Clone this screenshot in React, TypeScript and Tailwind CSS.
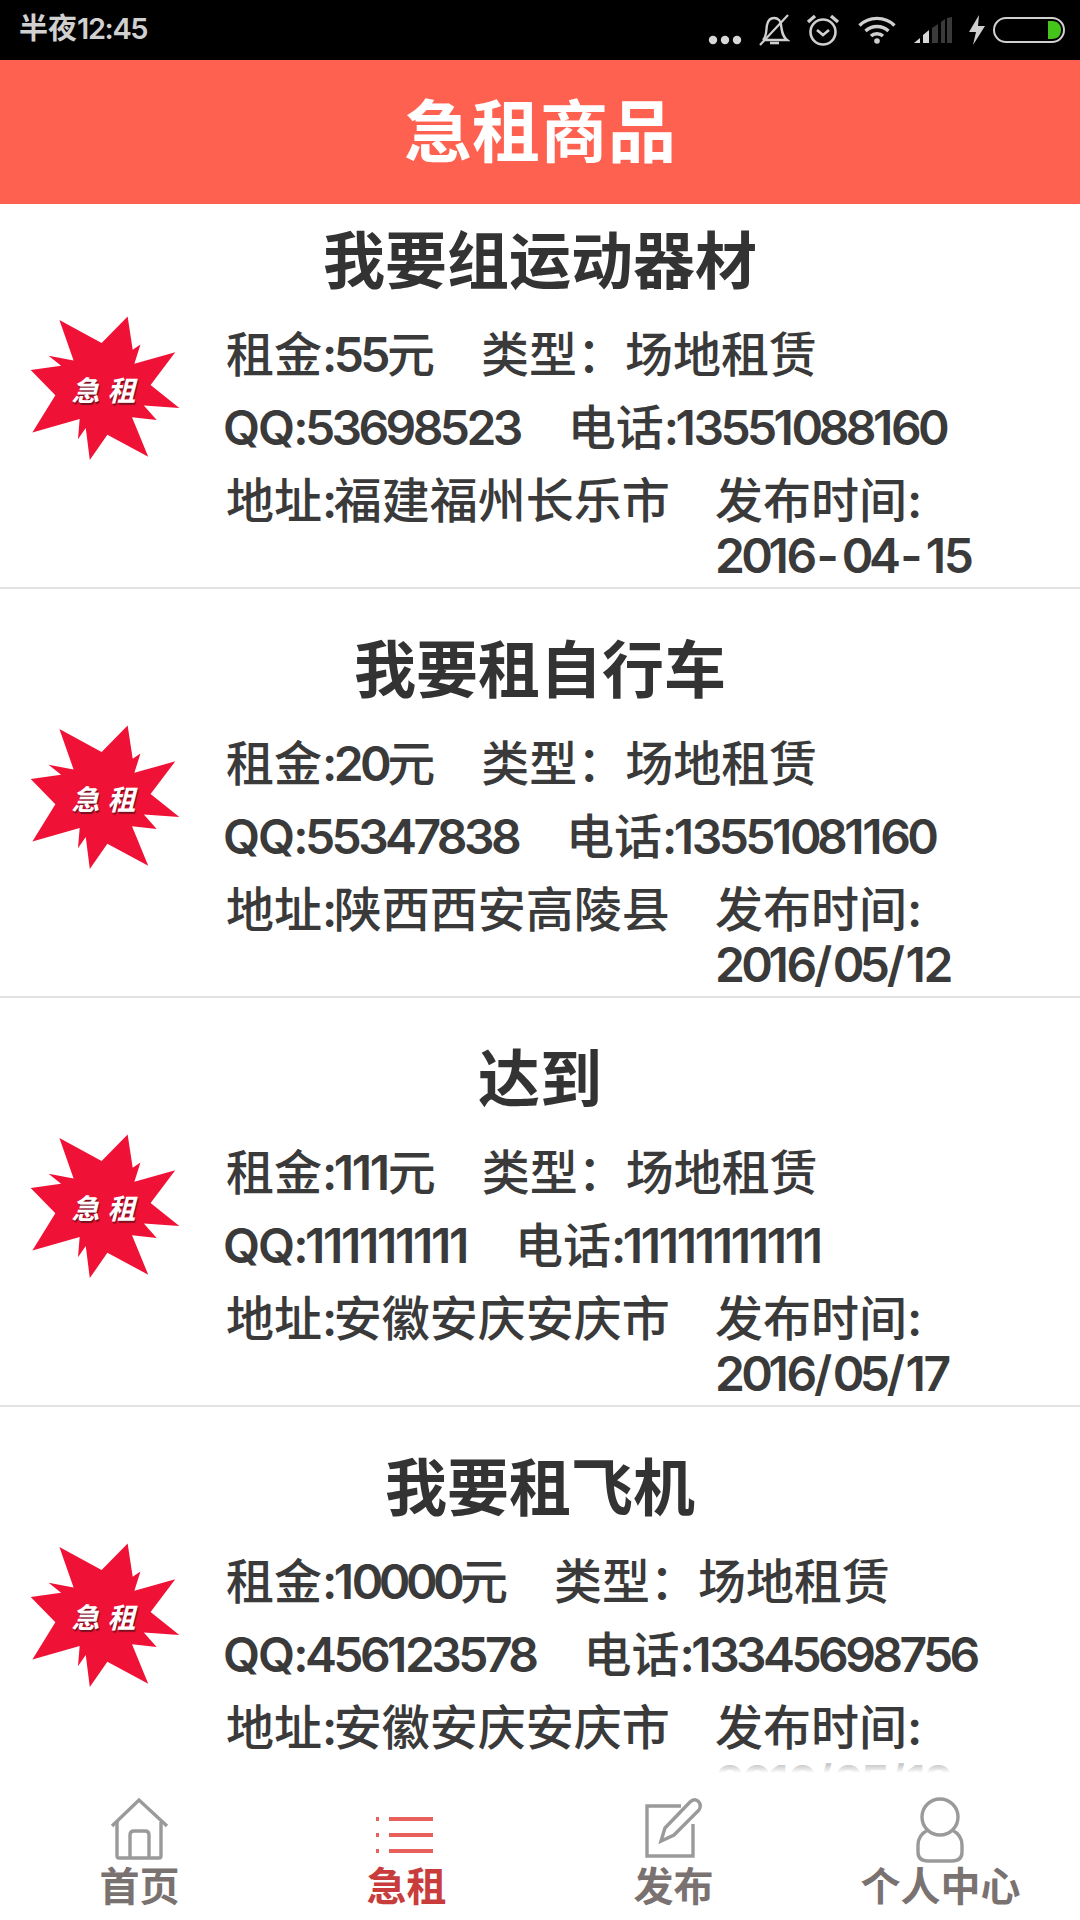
import React from 'react';

const items = [
  { title: '我要组运动器材', rent: '55', qq: '53698523', phone: '13551088160', addr: '福建福州长乐市', date: '2016-04-15' },
  { title: '我要租自行车', rent: '20', qq: '55347838', phone: '13551081160', addr: '陕西西安高陵县', date: '2016/05/12' },
  { title: '达到', rent: '111', qq: '111111111', phone: '11111111111', addr: '安徽安庆安庆市', date: '2016/05/17' },
  { title: '我要租飞机', rent: '10000', qq: '456123578', phone: '13345698756', addr: '安徽安庆安庆市', date: '2016/05/12' },
];

// the screenshot's digits are narrow and proportional, so each kind gets its own spacing
const charClass = (c: string) => {
  if (c === 'Q') return 'tracking-[-2px]';
  if (c === '1') return 'tracking-[-2.3px]';
  if (c === '0') return 'tracking-[-4.6px]';
  if (c === '-') return 'mx-[3px] tracking-[0px]';
  if (c === '/') return 'mx-[0.5px] tracking-[0px]';
  return 'tracking-[-3.6px]';
};

const Txt = ({ children }: { children: string }) => (
  <>
    {children.split(/([A-Za-z0-9:\/\-]+)/).map((part, i) =>
      /[A-Za-z0-9:\/\-]/.test(part) ? (
        <span key={i} className="font-semibold">
          {part.split('').map((c, j) => (
            <span key={j} className={charClass(c)}>{c}</span>
          ))}
        </span>
      ) : (
        <span key={i}>{part}</span>
      )
    )}
  </>
);

const Burst = () => (
  <div className="relative w-[152px] h-[147px] -mt-[3px]">
    <svg viewBox="90 78 450 434" className="w-[152px] h-[147px]">
      <polygon
        fill="#f01236"
        points="180,92 305,160 382,82 397,180 420,165 402,222 523,188 450,285 535,353 430,345 468,388 395,380 443,497 322,432 270,507 258,412 235,445 240,385 100,425 168,315 95,240 185,228 148,198 222,212"
      />
    </svg>
    <div className="absolute inset-0 flex items-center justify-center gap-[8px] pr-[3px] text-[28px] leading-none font-bold italic text-white [text-shadow:1px_2px_1px_#7a1020] font-['Noto_Sans_CJK_SC',sans-serif]">
      <span>急</span>
      <span>租</span>
    </div>
  </div>
);

const Card = ({ item }: { item: (typeof items)[number] }) => (
  <div className="h-[385px] mb-[24px] border-b-2 border-[#e2e2e2] shrink-0">
    <div className="h-[114px] flex items-center justify-center text-[62px] font-bold text-[#333]">{item.title}</div>
    <div className="flex">
      <div className="w-[226px] pl-[29px] shrink-0">
        <Burst />
      </div>
      <div className="flex-1 text-[48px] font-medium text-[#3a3a3a]">
        <div className="h-[73px] flex items-center gap-[46px] whitespace-nowrap">
          <span><Txt>{`租金:${item.rent}元`}</Txt></span>
          <span>类型：场地租赁</span>
        </div>
        <div className="h-[73px] flex items-center gap-[48px] -ml-[3px] whitespace-nowrap">
          <span><Txt>{`QQ:${item.qq}`}</Txt></span>
          <span><Txt>{`电话:${item.phone}`}</Txt></span>
        </div>
        <div className="flex mt-[9px] leading-[55px] whitespace-nowrap">
          <div className="w-[489px] shrink-0"><Txt>{`地址:${item.addr}`}</Txt></div>
          <div>
            <div><Txt>发布时间:</Txt></div>
            <div><Txt>{item.date}</Txt></div>
          </div>
        </div>
      </div>
    </div>
  </div>
);

const StatusIcons = () => (
  <div className="flex items-center">
    <svg width="36" height="10" viewBox="0 0 36 10" className="mt-[20px]" fill="#d8d8d8">
      <circle cx="5" cy="5" r="4.2" />
      <circle cx="17" cy="5" r="4.2" />
      <circle cx="29" cy="5" r="4.2" />
    </svg>
    <svg width="32" height="32" viewBox="0 0 32 32" className="ml-[14px]" fill="none" stroke="#cfcfcf" strokeWidth="2.4">
      <path d="M5 26 C9 22 8 16 9 11 C10 6 13 4 16 4 C20 4 23 7 23 11 C24 17 24 22 29 26 H5" />
      <path d="M12 29 H21" strokeWidth="2.6" />
      <path d="M2 31 L30 1" strokeWidth="2.2" />
    </svg>
    <svg width="34" height="34" viewBox="0 0 34 34" className="ml-[16px]" fill="none" stroke="#cfcfcf" strokeWidth="2.6">
      <circle cx="17" cy="19" r="12.5" />
      <path d="M11 17 L17 22 L23 17" />
      <path d="M2 9 L9 3" strokeWidth="3.4" />
      <path d="M32 9 L25 3" strokeWidth="3.4" />
    </svg>
    <svg width="38" height="28" viewBox="0 0 38 28" className="ml-[18px]" fill="none" stroke="#cfcfcf" strokeWidth="3.4">
      <path d="M1.5 9.5 C11 0 27 0 36.5 9.5" />
      <path d="M7.5 15 C14 9 24 9 30.5 15" />
      <path d="M13 20 C16 17 22 17 25 20" />
      <circle cx="19" cy="25" r="2.8" fill="#cfcfcf" stroke="none" />
    </svg>
    <svg width="38" height="26" viewBox="0 0 38 26" className="ml-[18px]">
      <polygon points="0,26 6,21 6,26" fill="#d8d8d8" />
      <polygon points="9,18 15,13 15,26 9,26" fill="#d8d8d8" />
      <polygon points="18,11 24,7 24,26 18,26" fill="#3a3a3a" />
      <polygon points="27,5 31,2 31,26 27,26" fill="#3a3a3a" />
      <polygon points="33,1 38,0 38,26 33,26" fill="#3a3a3a" />
    </svg>
    <svg width="16" height="30" viewBox="0 0 16 30" className="ml-[17px]" fill="#cfcfcf">
      <polygon points="10,0 0,17 7,17 4,30 16,11 9,11" />
    </svg>
    <svg width="72" height="26" viewBox="0 0 72 26" className="ml-[8px]">
      <rect x="1" y="1" width="70" height="24" rx="12" fill="none" stroke="#d0d0d0" strokeWidth="2" />
      <path d="M55 4 H59 C65 4 68 8 68 13 C68 18 65 22 59 22 H55 Z" fill="#45c41a" />
    </svg>
  </div>
);

const HomeIcon = () => (
  <svg width="60" height="64" viewBox="0 0 60 64" fill="none" stroke="#9a9a9a" strokeWidth="3.4">
    <path d="M2 29 L29 3 L57 29" />
    <path d="M7 25 V59 Q7 61 9 61 H49 Q51 61 51 59 V25" />
    <path d="M20 60 V38 Q20 34 24 34 H35 Q39 34 39 38 V60" />
  </svg>
);

const ListIcon = () => (
  <svg width="58" height="38" viewBox="0 0 58 38" className="mt-[20px] -ml-[4px]" fill="#e8605c">
    <rect x="0" y="0" width="3" height="4" />
    <rect x="13" y="0" width="44" height="4" />
    <rect x="0" y="16" width="3" height="4" />
    <rect x="13" y="16" width="44" height="4" />
    <rect x="0" y="32" width="3" height="4" />
    <rect x="13" y="32" width="44" height="4" />
  </svg>
);

const EditIcon = () => (
  <svg width="60" height="62" viewBox="0 0 60 62" fill="none" stroke="#9a9a9a" strokeWidth="3.4">
    <path d="M37 9 H3 V59 H49 V27" />
    <path d="M17 44 L21 31 L46 5 Q50 1 54 4 Q58 8 55 13 L30 38 Z" />
  </svg>
);

const UserIcon = () => (
  <svg width="50" height="66" viewBox="0 0 50 66" fill="none" stroke="#9a9a9a" strokeWidth="3.4">
    <ellipse cx="24" cy="20" rx="18" ry="18" />
    <path d="M12 33 Q2 38 2 48 V55 Q2 64 12 64 H36 Q46 64 46 55 V48 Q46 38 36 33" />
  </svg>
);

const tabs = [
  { label: '首页', icon: <HomeIcon />, active: false },
  { label: '急租', icon: <ListIcon />, active: true },
  { label: '发布', icon: <EditIcon />, active: false },
  { label: '个人中心', icon: <UserIcon />, active: false },
];

export default function App() {
  return (
    <div className="w-[1080px] h-[1920px] flex flex-col bg-white overflow-hidden font-['Inter','Noto_Sans_CJK_SC',sans-serif]">
      <div className="h-[60px] shrink-0 bg-black flex items-center justify-between pl-[19px] pr-[15px]">
        <span className="text-[29px] font-semibold text-[#d0d0d0] -mt-[2px]">
          半夜<span className="tracking-[-1.4px]">12:45</span>
        </span>
        <StatusIcons />
      </div>
      <div className="h-[144px] shrink-0 bg-[#ff6150] flex items-center justify-center text-[68px] font-bold text-white">
        急租商品
      </div>
      <div className="flex-1 min-h-0 flex flex-col overflow-hidden">
        {items.map((item, i) => (
          <Card key={i} item={item} />
        ))}
      </div>
      <div className="relative h-[147px] shrink-0 bg-white pt-[24px] px-[6px] grid grid-cols-4">
        <div className="absolute left-0 right-0 -top-[18px] h-[18px] bg-linear-to-b from-white/40 to-white" />
        {tabs.map((t) => (
          <div key={t.label} className="flex flex-col items-center">
            <div className="h-[68px] flex items-start justify-center">{t.icon}</div>
            <span className={`text-[40px] leading-[44px] font-bold ${t.active ? 'text-[#c83c3c]' : 'text-[#7a7270]'}`}>
              {t.label}
            </span>
          </div>
        ))}
      </div>
    </div>
  );
}
